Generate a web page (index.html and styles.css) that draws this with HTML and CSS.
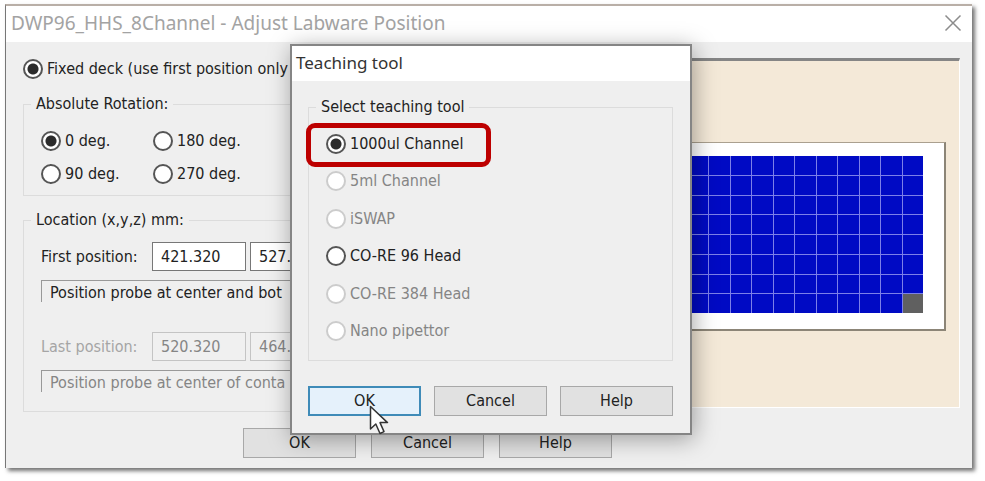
FILE: index.html
```html
<!DOCTYPE html>
<html lang="en">
<head>
<meta charset="utf-8">
<title>Adjust Labware Position</title>
<link rel="stylesheet" href="styles.css">
</head>
<body>
<main class="window">
  <header class="titlebar">
    <h1 class="title">DWP96_HHS_8Channel - Adjust Labware Position</h1>
    <button class="close" type="button" aria-label="Close">
      <svg width="18" height="18" viewBox="0 0 18 18"><path d="M1.500 1.500 16.500 16.500M16.500 1.500 1.500 16.500" fill="none" stroke="#8c8c8c" stroke-width="1.500"/></svg>
    </button>
  </header>

  <div class="content">
    <form class="settings">
      <label class="option"><input type="radio" name="deck" checked>Fixed deck (use first position only</label>

      <fieldset class="group">
        <legend>Absolute Rotation:</legend>
        <div class="rotation">
          <label class="option"><input type="radio" name="rotation" checked>0 deg.</label>
          <label class="option"><input type="radio" name="rotation">180 deg.</label>
          <label class="option"><input type="radio" name="rotation">90 deg.</label>
          <label class="option"><input type="radio" name="rotation">270 deg.</label>
        </div>
      </fieldset>

      <fieldset class="group location">
        <legend>Location (x,y,z) mm:</legend>
        <div class="position">
          <div class="fields">
            <label for="first-x">First position:</label>
            <input class="field" id="first-x" type="text" value="421.320">
            <input class="field" type="text" value="527." aria-label="First position y">
          </div>
          <p class="hint">Position probe at center and bot</p>
        </div>
        <div class="position disabled">
          <div class="fields">
            <label for="last-x">Last position:</label>
            <input class="field" id="last-x" type="text" value="520.320" disabled>
            <input class="field" type="text" value="464." aria-label="Last position y" disabled>
          </div>
          <p class="hint">Position probe at center of conta</p>
        </div>
      </fieldset>
    </form>

    <section class="preview" aria-label="Plate">
      <div class="plate"><div class="wells" id="wells"></div></div>
    </section>
  </div>

  <footer class="actions">
    <button class="button" type="button">OK</button>
    <button class="button" type="button">Cancel</button>
    <button class="button" type="button">Help</button>
  </footer>

  <section class="dialog" role="dialog" aria-labelledby="dialog-title">
    <h2 class="title dialog-title" id="dialog-title">Teaching tool</h2>
    <form class="dialog-body">
      <fieldset class="group">
        <legend>Select teaching tool</legend>
        <div class="tools">
          <label class="option highlighted"><input type="radio" name="tool" checked>1000ul Channel</label>
          <label class="option disabled"><input type="radio" name="tool" disabled>5ml Channel</label>
          <label class="option disabled"><input type="radio" name="tool" disabled>iSWAP</label>
          <label class="option"><input type="radio" name="tool">CO-RE 96 Head</label>
          <label class="option disabled"><input type="radio" name="tool" disabled>CO-RE 384 Head</label>
          <label class="option disabled"><input type="radio" name="tool" disabled>Nano pipettor</label>
        </div>
      </fieldset>
      <div class="dialog-actions">
        <button class="button primary" type="button">OK
          <svg class="cursor" width="21" height="30" viewBox="0 0 21 30"><path d="M1.500 1.500V24L6.800 19L11 28.500L15 26.600L11 17.600H18.500Z" fill="#fff" stroke="#333" stroke-width="1.500" stroke-linejoin="round"/></svg>
        </button>
        <button class="button" type="button">Cancel</button>
        <button class="button" type="button">Help</button>
      </div>
    </form>
  </section>
</main>
<script src="script.js"></script>
</body>
</html>
```
FILE: styles.css
```css
* {
  box-sizing: border-box;
}

body {
  margin: 0;
  padding: 4px 13px 13px 5px;
  background: #fff;
  color: #222;
  font: 16px/20px "DejaVu Sans Condensed", "DejaVu Sans", sans-serif;
}

.window {
  position: relative;
  background: #efefef;
  border-top: 2px solid #b9afa7;
  border-left: 1px solid #777;
  box-shadow: 3px 3px 4px rgba(0, 0, 0, 0.55);
}

.titlebar {
  display: flex;
  align-items: center;
  justify-content: space-between;
  height: 36px;
  padding: 0 10px 2px 5px;
  background: #fff;
  color: #a3a3a3;
}

.title {
  margin: 0;
  font: 19px/24px "Noto Sans", sans-serif;
}

.close {
  display: flex;
  padding: 0;
  border: 0;
  background: none;
}

.content {
  display: grid;
  grid-template-columns: minmax(0, 1fr) 330px;
  align-items: start;
  gap: 20px;
  padding: 16px 12px 0 17px;
}

.settings {
  display: flex;
  flex-direction: column;
}

.option {
  display: flex;
  align-items: center;
  gap: 4px;
  height: 22px;
  white-space: nowrap;
}

.option input {
  appearance: none;
  flex: none;
  width: 20px;
  height: 20px;
  margin: 0;
  border: 2px solid #555;
  border-radius: 50%;
  background: #fff;
}

.option input:checked {
  background: radial-gradient(circle, #2b2b2b 5px, #fff 6px);
}

.option input:disabled {
  border-color: #ccc;
}

.disabled {
  color: #858585;
}

.group {
  min-width: 0;
  margin: 14px 0 0;
  padding: 0 17px;
  border: 1px solid #dcdcdc;
}

.group legend {
  margin-left: -10px;
  padding: 0 5px;
}

.rotation {
  display: grid;
  grid-template-columns: 112px 1fr;
  gap: 11px 0;
  padding: 16px 0 10px;
}

.location {
  padding-top: 12px;
  padding-bottom: 19px;
}

.position + .position {
  margin-top: 30px;
}

.fields {
  display: grid;
  grid-template-columns: 107px 94px 94px;
  align-items: center;
  gap: 4px;
}

.field {
  width: 100%;
  height: 29px;
  padding: 0 8px;
  border: 1px solid #777;
  background: #fff;
  color: #222;
  font: inherit;
}

.field:disabled {
  border-color: #c4c4c4;
  background: #f0f0f0;
  color: #858585;
}

.position.disabled label {
  color: #a5a5a5;
}

.hint {
  height: 22px;
  margin: 9px 0 0;
  padding: 2px 8px 0;
  border-top: 1px solid #999;
  border-left: 1px solid #999;
}

.preview {
  padding: 81px 13px 76px;
  border: 1px solid #fff;
  border-top: 3px solid #858585;
  background: #f4e9d8;
}

.plate {
  padding: 13px 21px 16px;
  border: 1px solid #aaa08f;
  border-right: 2px solid #8c8577;
  border-bottom: 2px solid #8c8577;
  background: #fff;
}

.wells {
  display: grid;
  grid-template: repeat(8, 1fr) / repeat(12, 1fr);
  gap: 1px;
  height: 157px;
  background: #7c80e8;
}

.well {
  background: #000ac4;
}

.well.last {
  background: #606060;
}

.actions {
  display: flex;
  gap: 15px;
  padding: 16px 0 10px 237px;
}

.button {
  position: relative;
  width: 113px;
  height: 30px;
  padding: 0;
  border: 1px solid #a8a8a8;
  background: #e1e1e1;
  color: #222;
  font: inherit;
}

.button.primary {
  border: 2px solid #3f8bb8;
  background: #e5f1fb;
}

.dialog {
  position: absolute;
  top: 38px;
  left: 284px;
  width: 402px;
  border: 2px solid #858585;
  background: #efefef;
  box-shadow: 2px 4px 22px rgba(0, 0, 0, 0.35);
}

.dialog-title {
  padding: 5px 4px 6px;
  background: #fff;
  color: #333;
  font-size: 17px;
}

.dialog-body {
  padding: 2px 17px 17px 16px;
}

.tools {
  display: grid;
  grid-auto-rows: 1fr;
  align-items: center;
  height: 225px;
  margin: 8px 0 10px;
}

.option.highlighted {
  position: relative;
  justify-self: start;
}

.option.highlighted::after {
  content: "";
  position: absolute;
  inset: -10px -28px -12px -20px;
  border: 5px solid #bd0000;
  border-radius: 9px;
}

.dialog-body .group {
  margin-top: 14px;
}

.dialog-actions {
  display: flex;
  justify-content: space-between;
  margin-top: 25px;
}

.cursor {
  position: absolute;
  top: 17px;
  left: 59px;
}
```
FILE: script.js
```js
const wells = document.getElementById("wells");
for (let i = 0; i < 96; i += 1) {
  const well = document.createElement("span");
  well.className = i === 95 ? "well last" : "well";
  wells.append(well);
}
```
